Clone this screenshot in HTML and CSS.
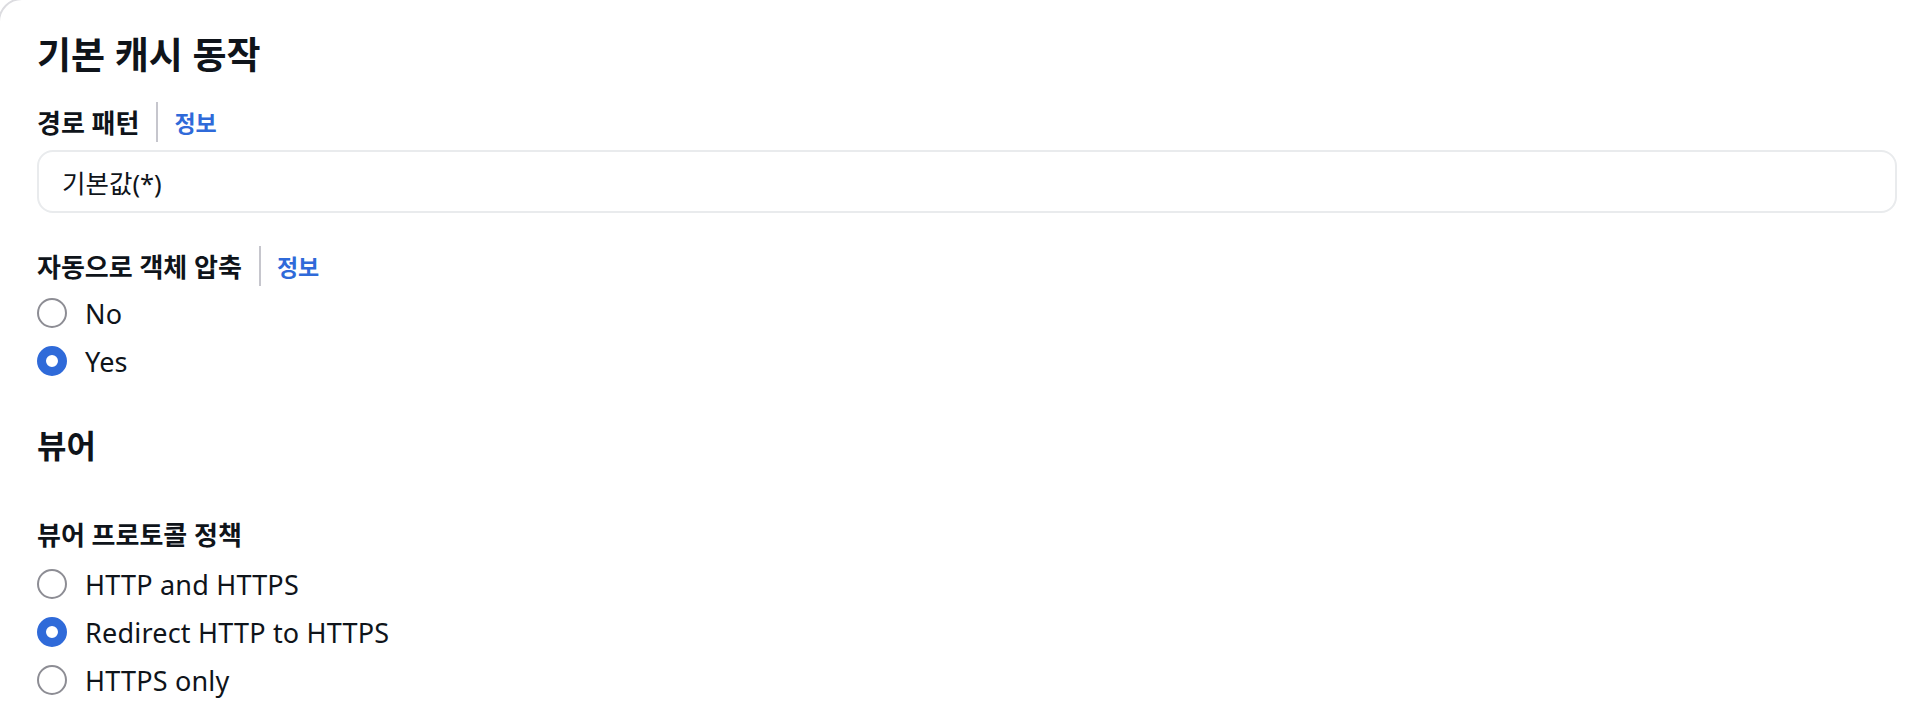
FILE: index.html
```html
<!DOCTYPE html>
<html lang="ko">
<head>
    <meta charset="UTF-8">
    <meta name="viewport" content="width=device-width, initial-scale=1.0">
    <title>기본 캐시 동작</title>
    <link rel="stylesheet" href="styles.css">
</head>
<body>

    <!-- Cache behavior panel -->
    <div class="panel">
        <h2 class="section-title">기본 캐시 동작</h2>

        <div class="field">
            <div class="field-label">
                <span>경로 패턴</span>
                <span class="divider"></span>
                <a href="#" class="info-link">정보</a>
            </div>
            <div class="text-input">기본값(*)</div>
        </div>

        <div class="field field-compress">
            <div class="field-label">
                <span>자동으로 객체 압축</span>
                <span class="divider"></span>
                <a href="#" class="info-link">정보</a>
            </div>
            <div class="radio-group">
                <label class="radio"><span class="radio-dot"></span>No</label>
                <label class="radio"><span class="radio-dot checked"></span>Yes</label>
            </div>
        </div>

        <!-- Viewer -->
        <h3 class="section-subtitle">뷰어</h3>

        <div class="field field-viewer">
            <div class="field-label">
                <span>뷰어 프로토콜 정책</span>
            </div>
            <div class="radio-group">
                <label class="radio"><span class="radio-dot"></span>HTTP and HTTPS</label>
                <label class="radio"><span class="radio-dot checked"></span>Redirect HTTP to HTTPS</label>
                <label class="radio"><span class="radio-dot"></span>HTTPS only</label>
            </div>
        </div>
    </div>

</body>
</html>
```

FILE: styles.css
```css
/* General Reset */
* {
    margin: 0;
    padding: 0;
    box-sizing: border-box;
}

body {
    font-family: "Noto Sans", "Noto Sans CJK KR", sans-serif;
    color: #0f141a;
    background-color: #ffffff;
    overflow: hidden;
}

/* Panel (card cut off by the window edges) */
.panel {
    margin: -2px -40px 0 -2px;
    padding: 33px 69px 0 37px;
    border: 2px solid #dcdce0;
    border-radius: 24px;
    min-height: 760px;
}

.section-title {
    font-size: 37px;
    font-weight: 700;
    line-height: 44px;
}

.section-subtitle {
    font-size: 32px;
    font-weight: 700;
    line-height: 40px;
    margin-top: 41px;
}

/* Fields */
.field {
    margin-top: 25px;
}

.field-compress {
    margin-top: 33px;
}

.field-viewer {
    margin-top: 48px;
}

.field-label {
    display: flex;
    align-items: center;
    height: 40px;
    font-size: 26px;
    font-weight: 700;
}

.divider {
    width: 2px;
    height: 40px;
    background-color: #c6c6cd;
    margin: 0 16px 0 17px;
}

.info-link {
    font-size: 23px;
    font-weight: 700;
    color: #2f6ad9;
    text-decoration: none;
}

.text-input {
    margin-top: 8px;
    height: 63px;
    border: 2px solid #e9ebed;
    border-radius: 16px;
    padding: 0 23px;
    display: flex;
    align-items: center;
    font-size: 25.5px;
}

/* Radio buttons */
.radio-group {
    margin-top: 3px;
    display: flex;
    flex-direction: column;
}

.field-viewer .radio-group {
    margin-top: 6px;
}

.radio {
    display: flex;
    align-items: center;
    height: 48px;
    font-size: 27px;
    letter-spacing: 0.2px;
}

.radio-dot {
    width: 30px;
    height: 30px;
    border-radius: 50%;
    border: 2px solid #8d8d94;
    background-color: #ffffff;
    margin-right: 18px;
    flex-shrink: 0;
}

.radio-dot.checked {
    border: 9px solid #2f6ad9;
}
```
